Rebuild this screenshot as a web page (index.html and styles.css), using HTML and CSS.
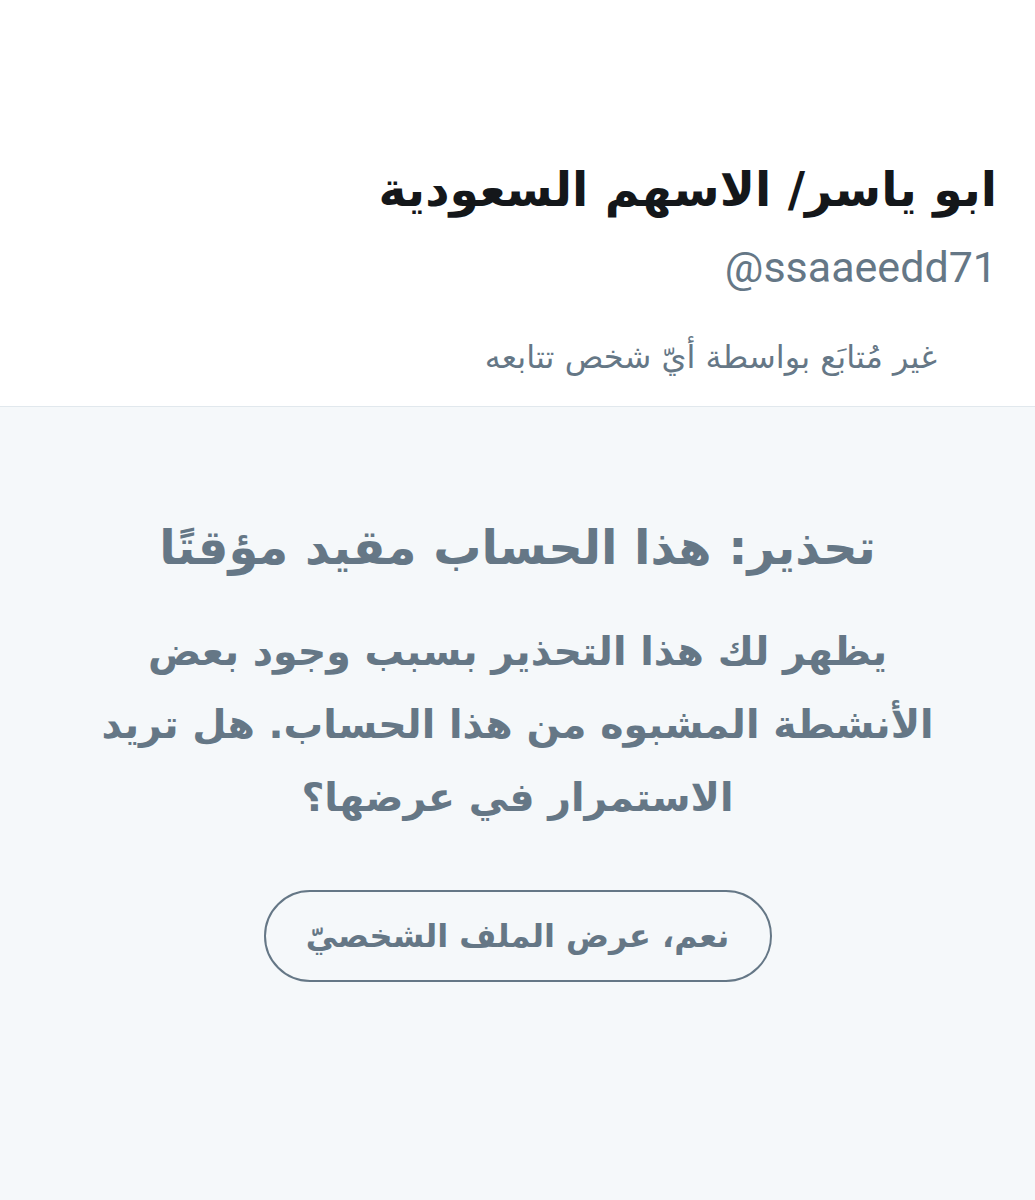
FILE: index.html
```html
<!DOCTYPE html>
<html lang="ar" dir="rtl">
<head>
<meta charset="utf-8">
<link rel="stylesheet" href="styles.css">
</head>
<body>
<header class="profile">
  <h1 class="name">ابو ياسر/ الاسهم السعودية</h1>
  <div class="handle" dir="ltr">@ssaaeedd71</div>
  <p class="follow">غير مُتابَع بواسطة أيّ شخص تتابعه</p>
</header>
<main class="warning">
  <h2 class="title">تحذير: هذا الحساب مقيد مؤقتًا</h2>
  <p class="desc">يظهر لك هذا التحذير بسبب وجود بعض الأنشطة المشبوه من هذا الحساب. هل تريد الاستمرار في عرضها؟</p>
  <button class="view-btn">نعم، عرض الملف الشخصيّ</button>
</main>
</body>
</html>
```
FILE: styles.css
```css
html, body {
  margin: 0;
  padding: 0;
  background: #f5f8fa;
}
body {
  font-family: "DejaVu Sans", "Noto Sans", sans-serif;
  width: 1035px;
  min-height: 1200px;
}
.profile {
  background: #ffffff;
  border-bottom: 1px solid #e1e8ed;
  padding: 140px 38px 0 0;
  height: 266px;
  box-sizing: content-box;
}
.name {
  margin: 0;
  font-size: 47.4px;
  font-weight: bold;
  color: #14171a;
  line-height: 100px;
}
.handle {
  text-align: right;
  font-family: Roboto, "Liberation Sans", sans-serif;
  font-size: 43px;
  color: #657786;
  line-height: 54px;
}
.follow {
  margin: 43px 60px 0 0;
  font-size: 32px;
  color: #657786;
  line-height: 40px;
}
.warning {
  display: flex;
  flex-direction: column;
  align-items: center;
  padding: 110px 70px 0;
  text-align: center;
  color: #657786;
}
.title {
  margin: 0;
  font-size: 48px;
  font-weight: bold;
  line-height: 60px;
}
.desc {
  margin: 38px 0 0;
  font-size: 39.5px;
  font-weight: bold;
  line-height: 73px;
}
.view-btn {
  margin-top: 56px;
  width: 508px;
  height: 92px;
  border: 2px solid #657786;
  border-radius: 46px;
  background: transparent;
  color: #657786;
  font-family: "DejaVu Sans", sans-serif;
  font-size: 32px;
  font-weight: bold;
}
```
